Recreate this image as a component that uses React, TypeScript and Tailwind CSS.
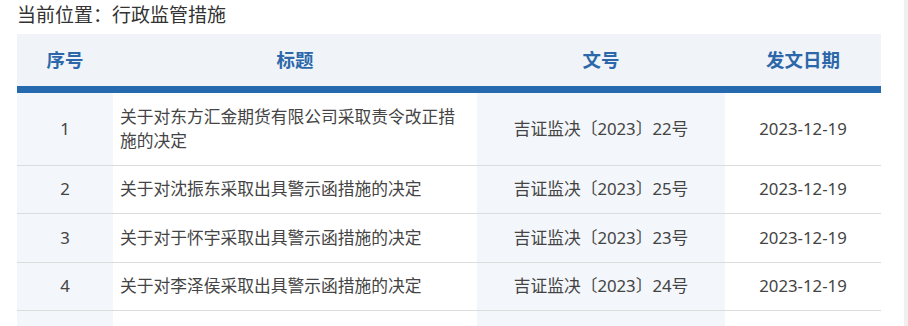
import React from 'react'

interface Row {
  no: number
  title: string
  docNo: string
  date: string
}

const rows: Row[] = [
  { no: 1, title: '关于对东方汇金期货有限公司采取责令改正措施的决定', docNo: '吉证监决〔2023〕22号', date: '2023-12-19' },
  { no: 2, title: '关于对沈振东采取出具警示函措施的决定', docNo: '吉证监决〔2023〕25号', date: '2023-12-19' },
  { no: 3, title: '关于对于怀宇采取出具警示函措施的决定', docNo: '吉证监决〔2023〕23号', date: '2023-12-19' },
  { no: 4, title: '关于对李泽侯采取出具警示函措施的决定', docNo: '吉证监决〔2023〕24号', date: '2023-12-19' },
  { no: 5, title: '', docNo: '', date: '' },
]

const th = 'py-[14px] leading-[24px] text-[18.5px] font-bold text-[#2c68a9] text-center bg-[#f0f4f9] border-b-[7px] border-[#2569ae]'
const td = 'py-[11.75px] border-b border-[#dcdcdc]'

export default function App() {
  return (
    <div
      className="w-[908px] h-[326px] bg-white overflow-hidden flex"
      style={{ fontFamily: '"Noto Sans", "Noto Sans CJK SC", sans-serif' }}
    >
      <div className="flex-1 pl-[17px]">
        <div className="h-[30px] leading-[30px] text-[19px] text-[#333]">当前位置：行政监管措施</div>

        <table className="mt-[4px] w-[864px] border-separate border-spacing-0 table-fixed">
          <colgroup>
            <col className="w-[96px]" />
            <col className="w-[364px]" />
            <col className="w-[248px]" />
            <col className="w-[156px]" />
          </colgroup>
          <thead>
            <tr>
              <th className={th}>序号</th>
              <th className={th}>标题</th>
              <th className={th}>文号</th>
              <th className={th}>发文日期</th>
            </tr>
          </thead>
          <tbody className="text-[16.75px] leading-[24px] text-[#444]">
            {rows.map((r) => (
              <tr key={r.no}>
                <td className={`${td} bg-[#f3f6fa] text-center`}>{r.title ? r.no : ''}</td>
                <td className={`${td} pl-[7px] pr-[10px] text-left`}>{r.title || '\u00a0'}</td>
                <td className={`${td} bg-[#f3f6fa] text-center`}>{r.docNo}</td>
                <td className={`${td} text-center`}>{r.date}</td>
              </tr>
            ))}
          </tbody>
        </table>
      </div>
      <div className="w-[4px] bg-[#f0f0f0]" />
    </div>
  )
}
